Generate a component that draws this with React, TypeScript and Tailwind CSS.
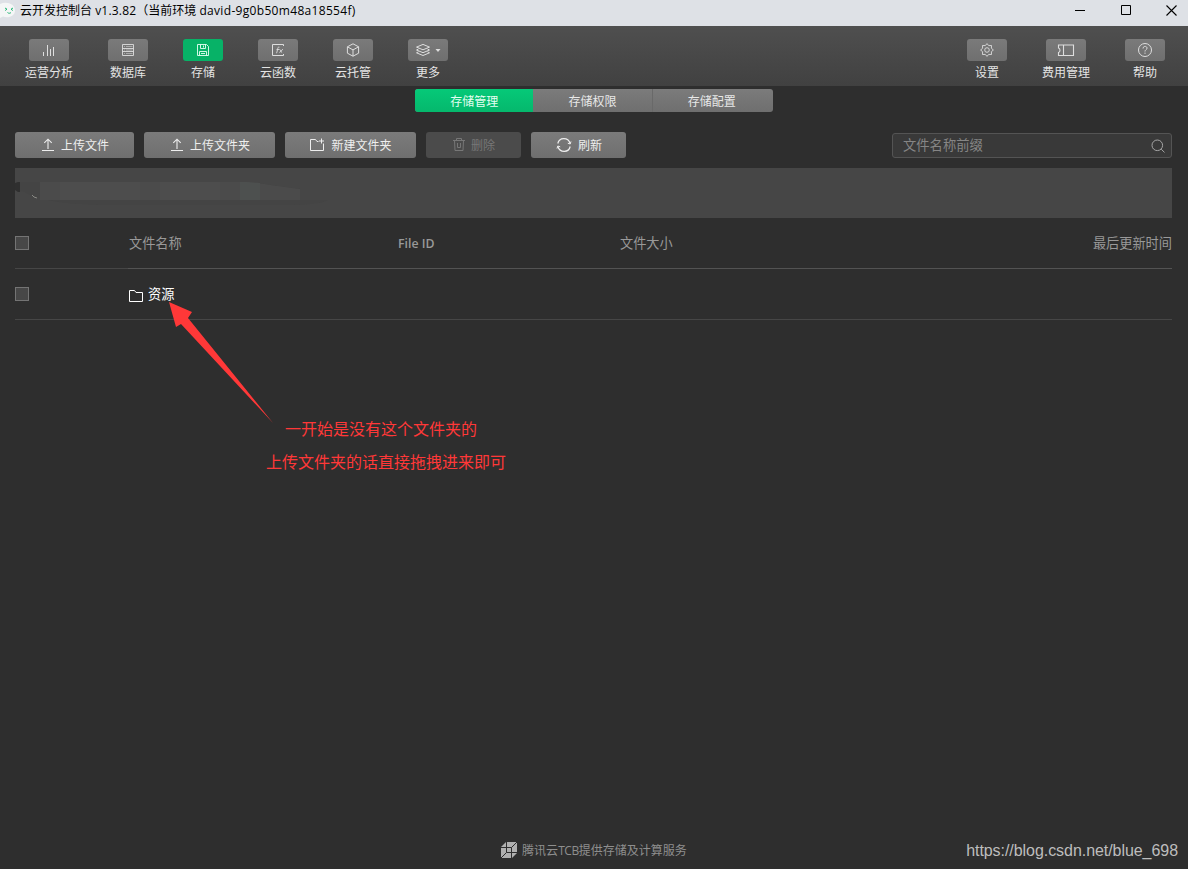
import type { ReactNode } from 'react';

const iconProps = { fill: 'none', stroke: 'currentColor' } as const;

const ChartIcon = () => (
  <svg width="14" height="14" viewBox="0 0 14 14" {...iconProps}>
    <path d="M1.5 9v4M5.500 2v11M8.500 6v7M11.500 4v9" />
  </svg>
);

const DatabaseIcon = () => (
  <svg width="14" height="14" viewBox="0 0 14 14" {...iconProps}>
    <path d="M1.500 1.500h11v11h-11zM1.500 5.500h11M1.500 8.500h11" strokeWidth="0.9" />
    <path d="M3 3.500h1M3 7h1M3 10.500h1M5 3.500h6.500M5 7h6.500M5 10.500h6.500" strokeWidth="0.5" />
  </svg>
);

const SaveIcon = () => (
  <svg width="14" height="14" viewBox="0 0 14 14" {...iconProps}>
    <path d="M1.500 1.500h9l2 2v9h-11zM4.500 1.500v4h5v-4M3.500 12.500v-4h7v4M7.500 2.500v2M5 10.500h4" strokeWidth="0.9" />
  </svg>
);

const FunctionIcon = () => (
  <svg width="14" height="14" viewBox="0 0 14 14" {...iconProps}>
    <path d="M12.500 3V1.500h-11v11h11V11" />
    <path d="M8.400 4.200c-1.200-.4-1.500.4-1.700 1.400L5.900 9.300c-.1.500-.4.700-.9.600M5.500 6.500h2.700M8.500 6.500c1.200-.3 1 2.800 2.600 3M12 6.400c-1.400 0-2 2.800-3.600 3" strokeWidth="0.9" />
  </svg>
);

const CubeIcon = () => (
  <svg width="14" height="14" viewBox="0 0 14 14" {...iconProps}>
    <path d="M7 .8l5.600 3v6.400L7 13.200l-5.600-3V3.800zM1.400 3.800L7 6.900l5.600-3.100M7 6.900v6.300" />
  </svg>
);

const LayersIcon = () => (
  <svg width="26" height="14" viewBox="0 0 26 14" {...iconProps}>
    <path d="M8 1.400l6.500 2.700L8 6.800 1.500 4.100zM3.500 6L1.500 7 8 9.700 14.500 7l-2-1M3.500 8.800l-2 1L8 12.500l6.500-2.700-2-1" />
    <path d="M20.500 6h5L23 9z" fill="currentColor" stroke="none" />
  </svg>
);

const GearIcon = () => (
  <svg width="14" height="14" viewBox="0 0 14 14" {...iconProps}>
    <path d="M7 .6l1.700 2 2.800-.1-.1 2.800 2 1.700-2 1.700.1 2.800-2.800-.1L7 13.400l-1.700-2-2.800.1.100-2.800-2-1.700 2-1.700-.1-2.800 2.800.1z" strokeWidth="0.9" />
    <circle cx="7" cy="7" r="2.300" strokeWidth="0.9" />
  </svg>
);

const TicketIcon = () => (
  <svg width="18" height="14" viewBox="0 0 18 14" {...iconProps}>
    <path d="M1.500 2h15v10.500h-15v-3c2-.5 2-4 0-4.500zM6.500 2v10.500" strokeWidth="1.100" />
  </svg>
);

const HelpIcon = () => (
  <svg width="16" height="16" viewBox="0 0 16 16" {...iconProps}>
    <circle cx="8" cy="8" r="6.500" />
    <path d="M6 6.500C6 3.700 10.100 3.800 10 6.200 10 7.700 8 7.700 8 9.500M8 10.600v1.200" />
  </svg>
);

const UploadIcon = () => (
  <svg width="14" height="14" viewBox="0 0 14 14" {...iconProps}>
    <path d="M7 11V1.500M3.300 4.800L7 1.200l3.700 3.600M1 12.500h12" strokeWidth="1.100" />
  </svg>
);

const NewFolderIcon = () => (
  <svg width="15" height="14" viewBox="0 0 15 14" {...iconProps}>
    <path d="M8.500 3.500H7L5.500 1.500h-5v11h13v-7M11.500.500v5M9 3h5" />
  </svg>
);

const TrashIcon = () => (
  <svg width="12" height="14" viewBox="0 0 12 14" {...iconProps}>
    <path d="M0 2.500h12M3.500 2.500v-2h5v2M1.500 2.500l.5 10h8l.5-10M4.500 5v4.500h3V5" />
  </svg>
);

const RefreshIcon = () => (
  <svg width="16" height="16" viewBox="0 0 16 16" {...iconProps}>
    <path d="M1.800 6.500C3.200.2 12-.2 14.200 6.500M14.200 9.500C12.800 15.800 4 16.200 1.800 9.500" strokeWidth="1.200" />
    <path d="M15 4.500l-.8 2.500-2.400-.8M1 11.500L1.800 9l2.400.8" />
  </svg>
);

const FolderIcon = () => (
  <svg width="14" height="12" viewBox="0 0 14 12" {...iconProps}>
    <path d="M.5 11.500V.500h5l1.500 2h6.500v9z" />
  </svg>
);

const SearchIcon = () => (
  <svg width="14" height="14" viewBox="0 0 14 14" {...iconProps}>
    <circle cx="6.300" cy="6.300" r="5.300" />
    <path d="M10.200 10.200l3.300 3.200" />
  </svg>
);

const AppIcon = () => (
  <svg width="16" height="18" viewBox="0 0 16 18">
    <path d="M0 2C7-1 15 2 15 8.500c0 6-7 8-12 6L0 16z" fill="#f4f6f6" />
    <path d="M5 6l2 1.200L5.200 8.500M13 6l-2 1.200 1.800 1.300M7.500 10.500c1 1 2.500 1 3.500 0" fill="none" stroke="#22b573" />
  </svg>
);

const TcbIcon = () => (
  <svg width="16" height="16" viewBox="0 0 16 16">
    <path d="M5 0h11v11l-5 5H0V5z" fill="#b0b0b0" />
    <path d="M5.500 0v10.500H16M0 5.500h10.500V16M0 16l5.500-5.500M10.500 5.500L16 0" fill="none" stroke="#2e2e2e" />
  </svg>
);

function NavItem({ label, icon, active }: { label: string; icon: ReactNode; active?: boolean }) {
  return (
    <button className="flex min-w-10 flex-col items-center text-[12px] leading-[18px] text-[#e4e4e4]">
      <span
        className={`flex h-[22px] w-10 items-center justify-center rounded-[3px] ${
          active ? 'bg-[#07b267] text-[#e8fff4]' : 'bg-linear-to-b from-[#7a7a7a] to-[#6f6f6f] text-[#dedede]'
        }`}
      >
        {icon}
      </span>
      <span className="mt-[3px] whitespace-nowrap">{label}</span>
    </button>
  );
}

function ActionButton({ label, icon, width, disabled }: { label: string; icon: ReactNode; width: string; disabled?: boolean }) {
  return (
    <button
      disabled={disabled}
      className={`flex h-[26px] shrink-0 items-center justify-center gap-[6px] rounded-[3px] pl-px text-[12px] ${width} ${
        disabled ? 'bg-[#4b4b4b] text-[#777]' : 'bg-linear-to-b from-[#7b7b7b] to-[#6f6f6f] text-[#eee]'
      }`}
    >
      {icon}
      <span className="pt-[2px]">{label}</span>
    </button>
  );
}

const Checkbox = () => <span className="block size-[14px] border border-[#747474] bg-[#474747]" />;

export default function App() {
  return (
    <div
      lang="zh-CN"
      className="relative flex h-[869px] w-[1188px] flex-col overflow-hidden bg-[#2e2e2e] font-['Open_Sans','Noto_Sans_CJK_SC',sans-serif]"
    >
      <header className="flex h-[26px] shrink-0 items-center justify-between bg-[#dee1e6] pr-[11px] text-black">
        <div className="flex items-center gap-1 pb-1">
          <AppIcon />
          <h1 className="whitespace-pre font-['Open_Sans','Noto_Sans_CJK_SC',sans-serif] text-[12px] leading-[18px]">
            云开发控制台 <span className="tracking-[0.200px]">v1.3.82</span>（当前环境 <span className="tracking-[0.320px]">david-9g0b50m48a18554f)</span>
          </h1>
        </div>
        <div className="flex items-center gap-[35px] pb-[5px]">
          <svg width="11" height="11" viewBox="0 0 11 11" {...iconProps}><path d="M1 5.500h10" /></svg>
          <svg width="11" height="11" viewBox="0 0 11 11" {...iconProps}><path d="M1.500.500h9v9h-9z" /></svg>
          <svg width="11" height="11" viewBox="0 0 11 11" {...iconProps}><path d="M.5.500l10 10M10.500.500l-10 10" strokeWidth="1.100" /></svg>
        </div>
      </header>

      <nav className="flex h-[60px] shrink-0 justify-between bg-linear-to-b from-[#4f4f4f] to-[#414141] pt-[13px] pr-[23px] pl-[25px]">
        <div className="flex items-start gap-[35px]">
          <NavItem label="运营分析" icon={<ChartIcon />} />
          <NavItem label="数据库" icon={<DatabaseIcon />} />
          <NavItem label="存储" icon={<SaveIcon />} active />
          <NavItem label="云函数" icon={<FunctionIcon />} />
          <NavItem label="云托管" icon={<CubeIcon />} />
          <NavItem label="更多" icon={<LayersIcon />} />
        </div>
        <div className="flex items-start gap-[35px]">
          <NavItem label="设置" icon={<GearIcon />} />
          <NavItem label="费用管理" icon={<TicketIcon />} />
          <NavItem label="帮助" icon={<HelpIcon />} />
        </div>
      </nav>

      <div className="mt-[3px] flex h-[23px] w-[358px] shrink-0 self-center overflow-hidden rounded-[3px] bg-linear-to-b from-[#7b7b7b] to-[#6f6f6f] text-[12px] text-[#e8e8e8]">
        <button className="flex-1 bg-linear-to-b from-[#06c978] to-[#05b86d] pt-[2px] text-[#e3fff2]">存储管理</button>
        <button className="flex-1 pt-[2px]">存储权限</button>
        <button className="flex-1 border-l border-[#696969] pt-[2px] pr-[2px]">存储配置</button>
      </div>

      <main className="flex flex-1 flex-col px-[15px] pt-5 pr-4">
        <div className="flex gap-[10px]">
          <ActionButton label="上传文件" icon={<UploadIcon />} width="w-[119px]" />
          <ActionButton label="上传文件夹" icon={<UploadIcon />} width="w-[131px]" />
          <ActionButton label="新建文件夹" icon={<NewFolderIcon />} width="w-[131px]" />
          <ActionButton label="删除" icon={<TrashIcon />} width="w-[95px]" disabled />
          <ActionButton label="刷新" icon={<RefreshIcon />} width="w-[95px]" />
          <div className="mt-px ml-auto flex h-[25px] w-[280px] items-center justify-between rounded-[3px] border border-[#545454] bg-[#393939] pr-[6px] pl-[10px] text-[13.300px] text-[#858585]">
            <span className="pt-px">文件名称前缀</span>
            <span className="text-[#a5a5a5]"><SearchIcon /></span>
          </div>
        </div>

        <div className="mt-[10px] h-[50px] shrink-0 bg-[#464646]">
          <svg width="330" height="50" viewBox="0 0 330 50">
            <path d="M0 15l3-1h2v10H3l-3-2z" fill="#2f2f2f" />
            <path d="M5 14h227c22 2 35 5 53 7v11h28c-10 6-45 5-88 5H85C52 36 20 32 10 24l-5-1z" fill="#444" />
            <path d="M25 14h207c22 2 35 5 53 7v11H25z" fill="#4b4b4b" />
            <path d="M45 14h80v18H45zM145 14h60v18h-60z" fill="#4d4d4d" />
            <path d="M225 14h7l13 1v17h-20z" fill="#4d504f" />
            <path d="M17 27l2 2 3 1" fill="none" stroke="#9a9a94" strokeWidth="0.800" />
          </svg>
        </div>

        <table className="w-full table-fixed border-separate border-spacing-0 text-left text-[13.200px] leading-[20px]">
          <colgroup>
            <col className="w-[113px]" />
            <col className="w-[270px]" />
            <col className="w-[221px]" />
            <col />
            <col className="w-[200px]" />
          </colgroup>
          <thead>
            <tr className="h-[51px] text-[#999]">
              <th className="border-b border-[#464646]"><Checkbox /></th>
              <th className="border-b border-[#535353] pl-px font-normal">文件名称</th>
              <th className="border-b border-[#535353] pt-px text-[12.300px] font-semibold">File ID</th>
              <th className="border-b border-[#535353] pl-px font-normal">文件大小</th>
              <th className="border-b border-[#535353] text-right font-normal">最后更新时间</th>
            </tr>
          </thead>
          <tbody>
            <tr className="h-[51px] text-white">
              <td className="border-b border-[#464646]"><Checkbox /></td>
              <td className="border-b border-[#464646]">
                <div className="flex items-center gap-[5px] pl-px">
                  <span className="pt-[3px]"><FolderIcon /></span>
                  <span>资源</span>
                </div>
              </td>
              <td className="border-b border-[#464646]" />
              <td className="border-b border-[#464646]" />
              <td className="border-b border-[#464646]" />
            </tr>
          </tbody>
        </table>
      </main>

      <footer className="flex h-[38px] shrink-0 items-center justify-center gap-[5px] text-[12px] text-[#8e8e8e]">
        <TcbIcon />
        <span className="pt-[2px]">腾讯云<span className="tracking-[-0.400px]">TCB</span>提供存储及计算服务</span>
      </footer>

      <svg className="absolute top-[302px] left-[168px]" width="106" height="124" viewBox="0 0 106 124">
        <path d="M1 0l23 10-4 6 85 105L13 22l-5 3z" fill="#ff3838" />
      </svg>
      <p className="absolute top-[417px] left-[285px] whitespace-nowrap text-[16px] leading-[24px] text-[#ff3838]">一开始是没有这个文件夹的</p>
      <p className="absolute top-[450px] left-[266px] whitespace-nowrap text-[16px] leading-[24px] text-[#ff3838]">上传文件夹的话直接拖拽进来即可</p>
      <p className="absolute right-[10px] bottom-[7px] font-['Liberation_Sans',sans-serif] text-[16px] leading-[22px] tracking-[-0.055px] text-[#bdbdbd]">https://blog.csdn.net/blue_698</p>
    </div>
  );
}
